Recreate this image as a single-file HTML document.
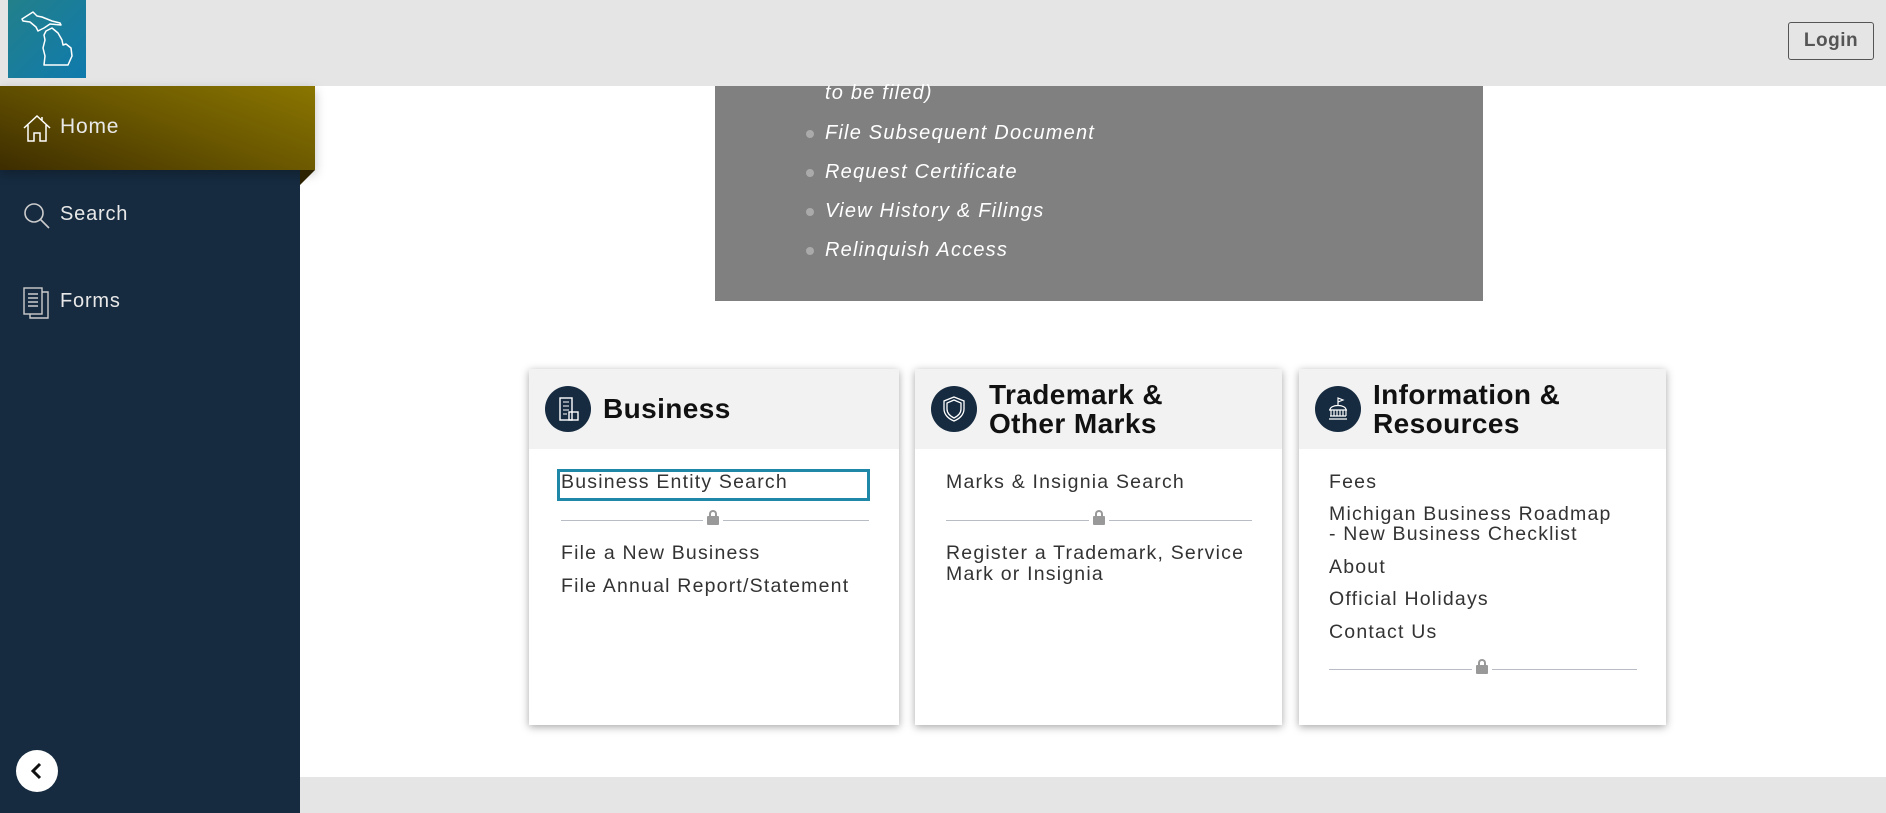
<!DOCTYPE html>
<html><head><meta charset="utf-8"><style>
*{margin:0;padding:0;box-sizing:border-box}
body{width:1886px;height:813px;overflow:hidden;background:#fff;font-family:"Liberation Sans",sans-serif;position:relative}
.a{position:absolute}
.top{left:0;top:0;width:1886px;height:86px;background:#e5e5e5}
.logo{left:8px;top:0;width:78px;height:78px;background:linear-gradient(135deg,#23808a,#0f7aad)}
.login{left:1788px;top:22px;width:86px;height:38px;border:1px solid #555;border-radius:3px;font-size:19px;font-weight:bold;color:#555;text-align:center;line-height:36px;letter-spacing:.5px}
.side{left:0;top:86px;width:300px;height:727px;background:#162b40}
.home{left:0;top:86px;width:315px;height:84px;background:linear-gradient(200deg,#8a7600 0%,#6b5800 45%,#3d2d00 100%);box-shadow:0 4px 10px rgba(0,0,0,.25)}
.fold{left:300px;top:170px;width:0;height:0;border-top:15px solid #2e2300;border-right:15px solid transparent}
.nav{color:#e8e8e8;font-size:20px;letter-spacing:.8px}
.bottom{left:300px;top:777px;width:1586px;height:36px;background:#e5e5e5}
.coll{left:16px;top:750px;width:42px;height:42px;border-radius:50%;background:#fff}
.gray{left:715px;top:86px;width:768px;height:215px;background:#808080}
.li{color:#fff;font-style:italic;font-size:20px;left:825px;letter-spacing:1.2px}
.dot{left:806px;width:8px;height:8px;border-radius:50%;background:#aaa}
.card{background:#fff;box-shadow:0 2px 8px rgba(0,0,0,.35);top:369px;height:356px}
.ch{position:absolute;left:0;top:0;width:100%;height:80px;background:#f2f2f2}
.ic{position:absolute;left:16px;top:17px;width:46px;height:46px;border-radius:50%;background:#162b40}
.tt{position:absolute;left:74px;font-weight:bold;font-size:28px;color:#111;line-height:29px;letter-spacing:.4px}
.lk{position:absolute;font-size:19.5px;color:#333;line-height:21px;letter-spacing:1.2px}
.div{position:absolute;height:1px;background:#b8bcc4}
.lock{position:absolute;width:12px;height:9px;background:#999;border-radius:1px}
.lock:before{content:"";position:absolute;left:2px;top:-6px;width:8px;height:8px;border:2px solid #999;border-bottom:none;border-radius:4px 4px 0 0;box-sizing:border-box}
</style></head><body>
<div class="a top"></div>
<div class="a logo"><svg width="78" height="78" viewBox="0 0 78 78"><path d="M14 19 L25 12 L29 16 L34 17 L44 21 L52 23 L53 25 L42 24 L36 28 L30 31 L28 27 L22 22 L15 21 Z M38 31 L44 28 L50 33 L54 40 L55 45 L58 44 L63 48 L64 56 L60 65 L36 65 L37 56 L35 48 L37 40 L36 35 Z" fill="none" stroke="#fff" stroke-width="1.5" stroke-linejoin="round"/></svg></div>
<div class="a login">Login</div>
<div class="a side"></div>
<div class="a home"></div>
<div class="a fold"></div>
<svg class="a" style="left:22px;top:114px" width="30" height="30" viewBox="0 0 30 30"><path d="M2 14 L15 2 L28 14 M6 11 V27 H12 V19 H18 V27 H24 V11 M20 6 V3" fill="none" stroke="#fff" stroke-width="1.5"/></svg>
<div class="a nav" style="left:60px;top:115px;font-size:21px">Home</div>
<svg class="a" style="left:23px;top:202px" width="28" height="28" viewBox="0 0 28 28"><circle cx="11" cy="11" r="9" fill="none" stroke="#ccc" stroke-width="1.6"/><path d="M17 17 L26 26" stroke="#ccc" stroke-width="1.6"/></svg>
<div class="a nav" style="left:60px;top:203px">Search</div>
<svg class="a" style="left:23px;top:287px" width="28" height="32" viewBox="0 0 28 32"><rect x="1" y="1" width="18" height="26" fill="none" stroke="#ccc" stroke-width="1.4"/><path d="M19 5 H25 V31 H7 V27 M5 7H15M5 11H15M5 15H15M5 19H15" fill="none" stroke="#ccc" stroke-width="1.4"/></svg>
<div class="a nav" style="left:60px;top:290px">Forms</div>
<div class="a bottom"></div>
<div class="a coll"><svg width="42" height="42"><path d="M24 14 L17 21 L24 28" fill="none" stroke="#111" stroke-width="3"/></svg></div>
<div class="a gray"></div>
<div class="a li" style="top:82px">to be filed)</div>
<div class="a dot" style="top:130px"></div><div class="a li" style="top:122px">File Subsequent Document</div>
<div class="a dot" style="top:169px"></div><div class="a li" style="top:161px">Request Certificate</div>
<div class="a dot" style="top:208px"></div><div class="a li" style="top:200px">View History &amp; Filings</div>
<div class="a dot" style="top:247px"></div><div class="a li" style="top:239px">Relinquish Access</div>

<div class="a card" style="left:529px;width:370px">
<div class="ch"><div class="ic"><svg width="46" height="46"><rect x="15" y="12" width="12" height="22" fill="none" stroke="#fff" stroke-width="1.4"/><rect x="24" y="26" width="9" height="8" fill="none" stroke="#fff" stroke-width="1.4"/><path d="M18 16H24M18 20H24M18 24H24M18 28H22" stroke="#fff"/></svg></div><div class="tt" style="top:25px">Business</div></div>
<div class="a" style="left:28px;top:100px;width:313px;height:32px;border:3px solid #1f87a8"></div>
<div class="lk" style="left:32px;top:103px">Business Entity Search</div>
<div class="div" style="left:32px;top:151px;width:308px"></div><div class="lock" style="left:178px;top:147px;box-shadow:0 0 0 4px #fff"></div>
<div class="lk" style="left:32px;top:174px">File a New Business</div>
<div class="lk" style="left:32px;top:207px">File Annual Report/Statement</div>
</div>

<div class="a card" style="left:915px;width:367px">
<div class="ch"><div class="ic"><svg width="46" height="46"><path d="M23 11 L33 15 V23 C33 29 28 33 23 35 C18 33 13 29 13 23 V15 Z M23 14 L30 17 V23 C30 27 27 30 23 32 C19 30 16 27 16 23 V17 Z" fill="none" stroke="#fff" stroke-width="1.3"/></svg></div><div class="tt" style="top:11px">Trademark &amp;<br>Other Marks</div></div>
<div class="lk" style="left:31px;top:103px">Marks &amp; Insignia Search</div>
<div class="div" style="left:31px;top:151px;width:306px"></div><div class="lock" style="left:178px;top:147px;box-shadow:0 0 0 4px #fff"></div>
<div class="lk" style="left:31px;top:174px">Register a Trademark, Service<br>Mark or Insignia</div>
</div>

<div class="a card" style="left:1299px;width:367px">
<div class="ch"><div class="ic"><svg width="46" height="46"><path d="M14 33H32M15 30H31M16 24V30M19 24V30M22 24V30M25 24V30M28 24V30M31 24V30M14 24H32M15 24 C15 18 31 18 31 24 M23 19V12 L28 14 L23 16" fill="none" stroke="#fff" stroke-width="1.2"/></svg></div><div class="tt" style="top:11px">Information &amp;<br>Resources</div></div>
<div class="lk" style="left:30px;top:103px">Fees</div>
<div class="lk" style="left:30px;top:135px;line-height:20px">Michigan Business Roadmap<br>- New Business Checklist</div>
<div class="lk" style="left:30px;top:188px">About</div>
<div class="lk" style="left:30px;top:220px">Official Holidays</div>
<div class="lk" style="left:30px;top:253px">Contact Us</div>
<div class="div" style="left:30px;top:300px;width:308px"></div><div class="lock" style="left:177px;top:296px;box-shadow:0 0 0 4px #fff"></div>
</div>
</body></html>
